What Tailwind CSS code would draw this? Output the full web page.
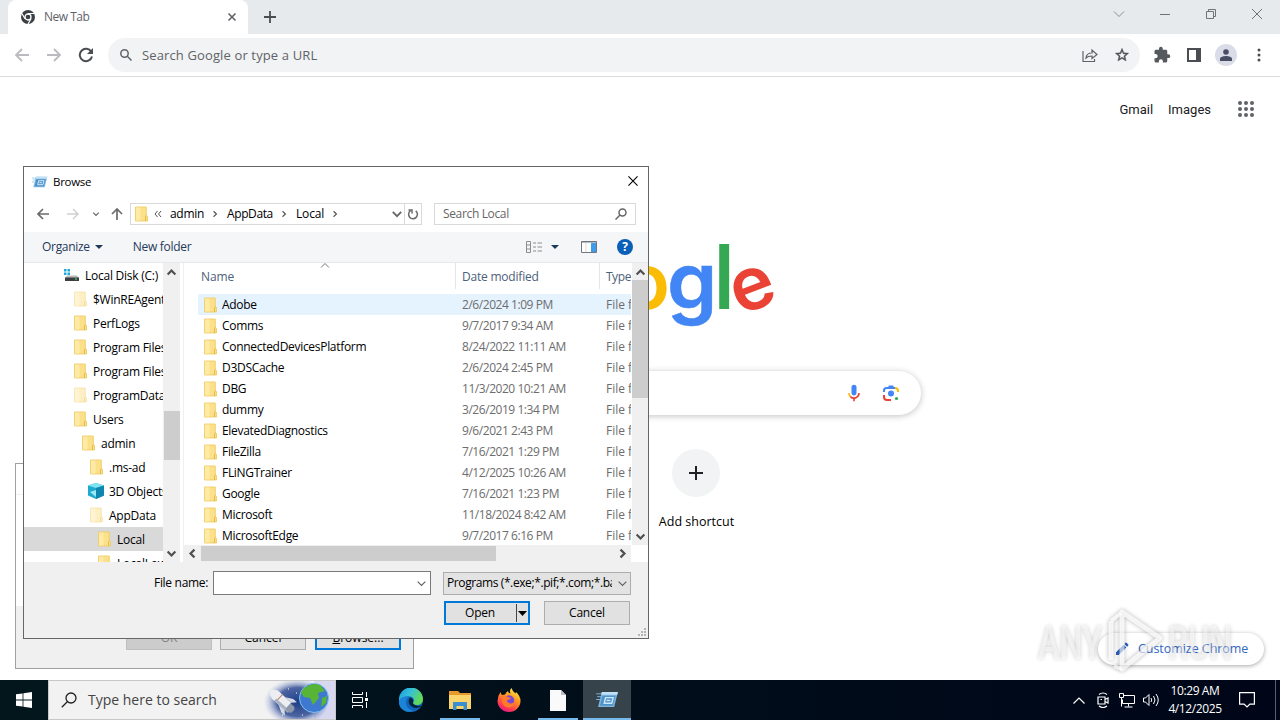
<!DOCTYPE html>
<html lang="en">
<head>
  <meta charset="UTF-8">
  <meta name="viewport" content="width=device-width, initial-scale=1.0">
  <title>New Tab</title>
  <script src="https://cdn.jsdelivr.net/npm/@tailwindcss/browser@4"></script>
</head>
<body class="relative w-[1280px] h-[720px] overflow-hidden flex flex-col bg-white font-['Open_Sans','Noto_Sans',sans-serif] text-xs text-black">

  <!-- shared icons -->
  <svg class="hidden">
    <symbol id="folder" viewBox="0 0 14 16">
      <path d="M.5.5h11.600v9.200l1.400 1v4.800H.5z" fill="#fde18a" stroke="#efcb62" />
      <path d="M1 1h5v14H1z" fill="#ffeaa6" />
      <path d="M11.400 15.500V11l1-1.400" fill="none" stroke="#dfb343" />
    </symbol>
    <symbol id="run" viewBox="0 0 24 18">
      <path d="M6 1h17l-4 16H2z" fill="#7fb6e0" />
      <path d="M6 1h17l-.7 3H5.300z" fill="#c2e1f5" />
      <path d="M6.500 5h14l-2.600 10.500H4z" fill="#4f93c9" />
      <path d="M10 7h8l-1.500 6H8.500z" fill="none" stroke="#cfe8f8" stroke-width="1.500" />
      <path d="M11 10h4" stroke="#cfe8f8" stroke-width="1.500" />
      <path d="M0 3h6M1 6h5M0 9h4" stroke="#7fb8e2" stroke-width="1" />
    </symbol>
    <symbol id="chev" viewBox="0 0 10 10">
      <path d="M1.500 3.200 5 6.800l3.500-3.600" fill="none" stroke="currentColor" stroke-width="var(--w,1.500)" />
    </symbol>
  </svg>

  <!-- tab strip -->
  <div class="h-[34px] shrink-0 bg-[#e7eaed] flex items-center text-[#5f6368]">
    <div class="ml-2 w-60 h-[34px] bg-white rounded-t-lg flex items-center pl-[13px] pr-[11px]">
      <svg class="w-[14px] h-[14px]" viewBox="0 0 14 14">
        <circle cx="7" cy="7" r="7" fill="#3c4043" />
        <circle cx="7" cy="7" r="3" fill="#3c4043" stroke="#fff" stroke-width="1.300" />
        <path d="M7 3.500h6.200M4 8.800.9 3.500M10 8.800 7 14" stroke="#fff" stroke-width="1.200" />
      </svg>
      <span class="ml-[9px] text-[12px] tracking-[-0.5px]">New Tab</span>
      <svg class="ml-auto w-[10px] h-[10px]" viewBox="0 0 10 10" fill="none" stroke="#5f6368" stroke-width="1.600"><path d="m1.500 1.500 7 7m0-7-7 7" /></svg>
    </div>
    <svg class="ml-4 w-3 h-3" viewBox="0 0 12 12" stroke="#4a4d51" stroke-width="1.800"><path d="M6 0v12M0 6h12" /></svg>
    <div class="ml-auto flex items-center mr-[17px] -mt-1.5">
      <svg class="w-3 h-3 mr-[34px]" viewBox="0 0 12 12" fill="none" stroke="#8a8d91"><path d="m1 3.500 5 5 5-5" /></svg>
      <svg class="w-3 h-3 mr-[34px]" viewBox="0 0 12 12" stroke="#6f7276"><path d="M1 6.500h10" /></svg>
      <svg class="w-3 h-3 mr-[34px]" viewBox="0 0 12 12" fill="none" stroke="#6f7276"><path d="M1.500 3.500h7v7h-7zM3.500 3.500v-2h7v7h-2" /></svg>
      <svg class="w-3 h-3" viewBox="0 0 12 12" stroke="#6f7276"><path d="m1 1 10 10M11 1 1 11" /></svg>
    </div>
  </div>

  <!-- toolbar -->
  <div class="h-[43px] shrink-0 border-b border-[#dadce0] flex items-center pl-3.5 pr-3 text-[#5f6368]">
    <svg class="w-4 h-4" viewBox="0 0 16 16" fill="none" stroke="#b9bbbe" stroke-width="1.800"><path d="M15 8H2m6-6L2 8l6 6" /></svg>
    <svg class="w-4 h-4 ml-4" viewBox="0 0 16 16" fill="none" stroke="#b9bbbe" stroke-width="1.800"><path d="M1 8h13M8 2l6 6-6 6" /></svg>
    <svg class="w-4 h-4 ml-4" viewBox="0 0 16 16" fill="none" stroke="#4a4d51" stroke-width="2"><path d="M13.300 4.800A6.200 6.200 0 1 0 14 9.500" /><path d="M15 1v6H9z" fill="#4a4d51" stroke="none" /></svg>
    <div class="ml-3.5 w-[1032px] h-[34px] rounded-full bg-[#f1f3f4] flex items-center pl-3 pr-2.5">
      <svg class="w-3 h-3" viewBox="0 0 12 12" fill="none" stroke="#5f6368" stroke-width="1.500"><circle cx="4.500" cy="4.500" r="3.700" /><path d="m7.300 7.300 4.200 4.200" /></svg>
      <span class="ml-[10px] pt-px text-[13px] tracking-[0.13px]">Search Google or type a URL</span>
      <svg class="ml-auto w-4 h-4" viewBox="0 0 16 16" fill="none" stroke="#5f6368" stroke-width="1.200"><path d="M1 4v10.500h11.500v-2.500M4 11c.3-3.600 2.500-5 6-5V3l5 4.500-5 4V9C7.500 9 5.500 9.300 4 11z" /></svg>
      <svg class="ml-4 w-4 h-4" viewBox="0 0 24 24" fill="#4a4d51" stroke="#4a4d51" stroke-width=".6"><path d="m22 9.240-7.190-.62L12 2 9.190 8.630 2 9.240l5.460 4.730L5.820 21 12 17.270 18.180 21l-1.630-7.030zM12 15.400l-3.760 2.270 1-4.280-3.320-2.880 4.380-.38L12 6.100l1.710 4.040 4.380.38-3.320 2.880 1 4.280z" /></svg>
    </div>
    <svg class="ml-[13px] w-[18px] h-[18px]" viewBox="0 0 24 24" fill="#55585c"><path d="M20.500 11H19V7c0-1.100-.9-2-2-2h-4V3.500a2.500 2.500 0 0 0-5 0V5H4c-1.100 0-2 .9-2 2v3.800h1.500a2.700 2.700 0 0 1 0 5.400H2V20c0 1.100.9 2 2 2h3.800v-1.500a2.700 2.700 0 0 1 5.400 0V22H17c1.100 0 2-.9 2-2v-4h1.500a2.500 2.500 0 0 0 0-5z" /></svg>
    <svg class="ml-4 w-[14px] h-[14px]" viewBox="0 0 14 14"><path d="M1 1h12v12H1z" fill="none" stroke="#4a4d51" stroke-width="2" /><path d="M9 1h4v12H9z" fill="#4a4d51" /></svg>
    <div class="ml-[14px] w-[22px] h-[22px] rounded-full bg-[#dadce8] flex items-center justify-center">
      <svg class="w-3 h-3" viewBox="0 0 12 12" fill="#4a4d66"><circle cx="6" cy="3" r="2.800" /><path d="M0 12V9.800C0 7.800 4 7 6 7s6 .8 6 2.800V12z" /></svg>
    </div>
    <svg class="ml-5 w-1 h-4" viewBox="0 0 4 16" fill="#4a4d51"><circle cx="2" cy="3" r="1.500" /><circle cx="2" cy="8" r="1.500" /><circle cx="2" cy="13" r="1.500" /></svg>
  </div>

  <!-- new tab page -->
  <main class="h-[603px] shrink-0 flex flex-col items-center">
    <div class="self-stretch flex items-center justify-end h-16 pr-[26px] text-[13px] text-[#202124] font-[Roboto,sans-serif]">
      <span class="pt-0.5">Gmail</span>
      <span class="ml-[15px] pt-0.5">Images</span>
      <svg class="ml-[27px] w-4 h-4" viewBox="0 0 16 16" fill="#5f6368">
        <circle cx="2" cy="2" r="2" /><circle cx="8" cy="2" r="2" /><circle cx="14" cy="2" r="2" />
        <circle cx="2" cy="8" r="2" /><circle cx="8" cy="8" r="2" /><circle cx="14" cy="8" r="2" />
        <circle cx="2" cy="14" r="2" /><circle cx="8" cy="14" r="2" /><circle cx="14" cy="14" r="2" />
      </svg>
    </div>
    <svg class="mt-[102px] w-[272px] h-[92px] font-[Inter,sans-serif] font-semibold" viewBox="0 0 272 92">
      <text x="118.500" y="66" font-size="78" fill="#fbbc05">o</text>
      <text transform="translate(163 66) scale(1.030 1)" font-size="78" fill="#4285f4" stroke="#4285f4" stroke-width=".5">g</text>
      <text transform="translate(210 66) scale(1 1.150)" font-size="78" fill="#34a853">l</text>
      <text transform="translate(226.500 66.500) rotate(-21 21.500 -21)" font-size="74" fill="#ea4335">e</text>
    </svg>
    <div class="mt-9 w-[562px] h-11 shrink-0 rounded-full bg-white shadow-[0_1px_6px_rgba(32,33,36,0.28)] flex items-center justify-end pr-[21px] gap-[18px]">
      <svg class="w-5 h-5" viewBox="0 0 24 24">
        <path d="M12 15c1.700 0 3-1.300 3-3V5a3 3 0 0 0-6 0v7c0 1.700 1.300 3 3 3z" fill="#4285f4" />
        <path d="M11 18.900h2V22h-2z" fill="#ea4335" />
        <path d="M7 12H5c0 1.900.8 3.700 2 5l1.500-1.400A5 5 0 0 1 7 12z" fill="#fbbc04" />
        <path d="M12 17a5 5 0 0 1-3.600-1.500L7 17a7 7 0 0 0 12-5h-2a5 5 0 0 1-5 5z" fill="#ea4335" />
      </svg>
      <svg class="w-[18px] h-[18px]" viewBox="0 0 18 18" fill="none" stroke-width="2">
        <path d="M2 8V6.500Q2 4 4.500 4H13" stroke="#4285f4" /><path d="M5.500 4 7 1.500h4L12.500 4z" fill="#4285f4" />
        <path d="M13 4q3 0 3 3v1" stroke="#fbbc04" /><path d="M2 11v2q0 3 3 3h4" stroke="#ea4335" />
        <circle cx="9" cy="9.500" r="3" fill="#4285f4" /><circle cx="14.500" cy="14.500" r="1.600" fill="#34a853" />
      </svg>
    </div>
    <div class="mt-[34px] flex text-[#202124]">
      <div class="w-28"></div>
      <div class="w-28 flex flex-col items-center">
        <div class="w-12 h-12 rounded-full bg-[#f1f3f4] flex items-center justify-center">
          <svg class="w-[14px] h-[14px]" viewBox="0 0 14 14" stroke="#202124" stroke-width="2"><path d="M7 0v14M0 7h14" /></svg>
        </div>
        <span class="mt-[17px] ml-px text-[12.500px] text-black">Add shortcut</span>
      </div>
    </div>
  </main>

  <!-- customize button and watermark -->
  <div class="absolute left-[1098px] top-[633px] w-[166px] h-8 rounded-full bg-white shadow-[0_1px_4px_rgba(0,0,0,0.35)] flex items-center pl-[17px] text-[#3367c4]">
    <svg class="w-3.5 h-3.5" viewBox="0 0 14 14" fill="#2b5fc0"><path d="M1 13v-2.800l7.500-7.500 2.800 2.800L3.800 13zM9.300 1.900l1.200-1.200q.5-.4 1 0l1.800 1.800q.4.5 0 1l-1.200 1.200z" /></svg>
    <span class="ml-[9px] pt-px text-[12.500px] tracking-[-0.05px]">Customize Chrome</span>
  </div>
  <div class="absolute left-[1038px] top-[608px] w-[196px] h-[64px] opacity-80">
    <svg class="w-full h-full font-[Roboto,sans-serif] font-medium drop-shadow-[0_0_2px_rgba(0,0,0,0.45)]" viewBox="0 0 196 64" fill="#fff" fill-opacity=".55">
      <text x="0" y="51" font-size="47" textLength="64" lengthAdjust="spacingAndGlyphs">ANY</text>
      <text x="130" y="51" font-size="47" textLength="64" lengthAdjust="spacingAndGlyphs">RUN</text>
      <path d="M73 13v39M84 4l38 26-38 31z" fill="none" stroke="#fff" stroke-opacity=".8" stroke-width="5" stroke-linejoin="round" />
      <path d="M73 13 83 5M76 58l8 3" fill="none" stroke="#fff" stroke-opacity=".8" stroke-width="4" />
    </svg>
  </div>

  <!-- Run window, behind -->
  <div class="absolute left-[15px] top-[463px] w-[399px] h-[206px] border border-[#a0a0a0] bg-white flex flex-col">
    <div class="h-[31px] border-b border-[#f0f0f0]"></div>
    <div class="mt-auto h-[62px] bg-[#f0f0f0] flex items-end pb-[18px] pl-[110px] gap-2 text-[12px]">
      <div class="w-[86px] h-6 bg-[#cccccc] border border-[#bfbfbf] text-[#838383] text-center leading-[22px]">OK</div>
      <div class="w-[86px] h-6 bg-[#e1e1e1] border border-[#adadad] text-center leading-[22px]">Cancel</div>
      <div class="ml-px w-[86px] h-6 bg-[#e1e1e1] border-2 border-[#0078d7] text-center leading-[20px]"><u>B</u>rowse...</div>
    </div>
  </div>

  <!-- Browse dialog -->
  <div class="absolute left-[23px] top-[166px] w-[626px] h-[473px] border border-[#666] bg-white flex flex-col">
    <div class="h-[30px] flex items-center pl-2 pr-[10px]">
      <svg class="w-4 h-3"><use href="#run" /></svg>
      <span class="ml-[5px] text-[11.500px] tracking-[-0.3px]">Browse</span>
      <svg class="ml-auto -mt-0.5 w-[10px] h-[10px]" viewBox="0 0 11 11" stroke="#000" stroke-width="1.200"><path d="m.5.5 10 10m0-10-10 10" /></svg>
    </div>

    <div class="h-[35px] flex items-center text-[#666] pl-[13px] pb-px">
      <svg class="w-3 h-3" viewBox="0 0 12 12" fill="none" stroke="#6b6b6b" stroke-width="1.700"><path d="M12 6H1m5-5L1 6l5 5" /></svg>
      <svg class="w-3 h-3 ml-[18px]" viewBox="0 0 12 12" fill="none" stroke="#cfcfcf" stroke-width="1.400"><path d="M0 6h11M6 1l5 5-5 5" /></svg>
      <svg class="w-2 h-2 ml-[13px]"><use href="#chev" /></svg>
      <svg class="w-3 h-3 ml-[11px]" viewBox="0 0 12 12" fill="none" stroke="#6b6b6b" stroke-width="1.700"><path d="M6 12V1M1 6l5-5 5 5" /></svg>
      <div class="ml-[7px] w-[292px] h-[22px] border border-[#d9d9d9] flex items-center text-black text-[12px] tracking-[-0.15px]">
        <svg class="ml-1 w-[13px] h-[16px]"><use href="#folder" /></svg>
        <svg class="ml-1.5 w-2 h-2" viewBox="0 0 8 8" fill="none" stroke="#555"><path d="M3.500 1 1 4l2.500 3M7 1 4.500 4 7 7" /></svg>
        <span class="ml-[8px] w-[34px] tracking-[-0.3px]">admin</span>
        <svg class="ml-[7px] w-2 h-2 -rotate-90 text-[#555]"><use href="#chev" /></svg>
        <span class="ml-[8px] w-[46px] tracking-[-0.4px]">AppData</span>
        <svg class="ml-[7px] w-2 h-2 -rotate-90 text-[#555]"><use href="#chev" /></svg>
        <span class="ml-[8px] w-[28px]">Local</span>
        <svg class="ml-[7px] w-2 h-2 -rotate-90 text-[#555]"><use href="#chev" /></svg>
        <svg class="ml-auto mr-px w-[12px] h-[12px] text-[#666]"><use href="#chev" /></svg>
        <div class="w-[17px] h-full border-l border-[#d9d9d9] flex items-center justify-center">
          <svg class="w-3 h-3" viewBox="0 0 12 12" fill="none" stroke="#6b6b6b" stroke-width="1.500"><path d="M3.500 2.700a4.400 4.400 0 1 0 5.300.2M1.500 2H5v3.500" /></svg>
        </div>
      </div>
      <div class="ml-3 w-[202px] h-[22px] border border-[#d9d9d9] flex items-center justify-between pl-2 pr-2 text-[#666] text-[12px] tracking-[-0.35px]">
        <span>Search Local</span>
        <svg class="w-3 h-3" viewBox="0 0 12 12" fill="none" stroke="#666" stroke-width="1.500"><circle cx="7.500" cy="4.500" r="3.500" /><path d="M5 7 .5 11.500" /></svg>
      </div>
    </div>

    <div class="h-[31px] bg-[#f5f6f7] border-b border-[#e8e8e8] flex items-center pl-[18px] pr-[15px] text-[12px] text-[#1e395b] tracking-[-0.3px]">
      <span>Organize</span>
      <svg class="ml-[5px] w-2 h-1" viewBox="0 0 8 4" fill="#1e395b"><path d="M0 0h8L4 4z" /></svg>
      <span class="ml-[30px]">New folder</span>
      <svg class="ml-auto w-4 h-3" viewBox="0 0 16 12" fill="none" stroke="#8d8d8d"><path d="M.5.500h4v11h-4zM.5 4h4M.5 8h4M7 2h3M11.500 2H16M7 6h3M11.500 6H16M7 10h3M11.500 10H16" /></svg>
      <svg class="ml-[9px] w-2 h-1" viewBox="0 0 8 4" fill="#1e395b"><path d="M0 0h8L4 4z" /></svg>
      <svg class="ml-[22px] w-4 h-3" viewBox="0 0 16 12"><path d="M.5.500h15v11H.5z" fill="#fff" stroke="#71777d" /><path d="M10 2h5v9h-5z" fill="#3d9be9" /><path d="M.5 1h15" stroke="#71777d" /><path d="M5 2v9" stroke="#d7dce0" /></svg>
      <div class="ml-5 w-4 h-4 rounded-full bg-[#0a5fb8] text-white font-bold text-[12px] leading-4 text-center">?</div>
    </div>

    <div class="h-[299px] flex">
      <div class="w-[139px] overflow-hidden" id="tree"></div>
      <div class="w-[17px] bg-[#f0f0f0] flex flex-col items-center text-[#505050] [--w:2]">
        <svg class="mt-1 w-[11px] h-[11px] rotate-180"><use href="#chev" /></svg>
        <div class="mt-[133px] ml-px w-4 h-[49px] bg-[#cdcdcd]"></div>
        <svg class="mt-auto mb-[3px] w-[11px] h-[11px]"><use href="#chev" /></svg>
      </div>
      <div class="w-1 border-r border-[#f0f0f0]"></div>
      <div class="flex-1 min-w-0 flex flex-col">
        <div class="h-[282px] flex">
          <div class="w-[447px] overflow-hidden">
            <div class="relative h-[31px] flex text-[#4c607a] text-[12px] leading-[27px] tracking-[-0.1px]">
              <div class="w-[272px] pl-[17px] h-[26px] border-r border-[#e5e5e5]">Name</div>
              <div class="w-[144px] pl-1.5 h-[26px] border-r border-[#e5e5e5] tracking-[-0.2px]">Date modified</div>
              <div class="pl-1.5 tracking-[-0.4px]">Type</div>
              <svg class="absolute left-[136px] top-0 w-2.5 h-[5px]" viewBox="0 0 10 5" fill="none" stroke="#777"><path d="m1 4.500 4-4 4 4" /></svg>
            </div>
            <div id="files"></div>
          </div>
          <div class="ml-px flex-1 bg-[#f0f0f0] flex flex-col items-center text-[#505050] [--w:2]">
            <svg class="mt-1 w-[11px] h-[11px] rotate-180"><use href="#chev" /></svg>
            <div class="mt-0.5 w-full h-[118px] bg-[#cdcdcd]"></div>
            <svg class="mt-auto mb-[3px] w-[11px] h-[11px]"><use href="#chev" /></svg>
          </div>
        </div>
        <div class="w-[447px] h-[17px] bg-[#f0f0f0] flex items-center pl-[3px] pr-[3px] text-[#505050] [--w:2]">
          <svg class="w-[11px] h-[11px] rotate-90"><use href="#chev" /></svg>
          <div class="ml-[3px] w-[295px] h-[15px] bg-[#cdcdcd]"></div>
          <svg class="ml-auto w-[11px] h-[11px] -rotate-90"><use href="#chev" /></svg>
        </div>
      </div>
    </div>

    <div class="relative flex-1 bg-[#f0f0f0] pt-[9px] pl-[130px] pr-[17px] text-[12px] tracking-[-0.2px]">
      <div class="flex items-center">
        <span class="w-[54px] whitespace-nowrap tracking-[-0.3px]">File name:</span>
        <div class="ml-[5px] w-[218px] h-6 bg-white border border-[#7a7a7a] flex items-center justify-end pr-[3px] text-[#606060] [--w:1]"><svg class="w-[11px] h-[11px]"><use href="#chev" /></svg></div>
        <div class="ml-3 w-[188px] h-[23px] bg-[#e3e3e3] border border-[#adadad] flex items-center pl-[3px] pr-0.5 text-[#606060] [--w:1]">
          <span class="w-[165px] overflow-hidden whitespace-nowrap text-black tracking-[-0.4px]">Programs (*.exe;*.pif;*.com;*.bat;*.cmd)</span>
          <svg class="ml-auto w-[11px] h-[11px] shrink-0"><use href="#chev" /></svg>
        </div>
      </div>
      <div class="mt-1.5 flex justify-end gap-[14px] pr-px">
        <div class="w-[86px] h-6 bg-[#e1e1e1] border-2 border-[#0078d7] flex items-center">
          <span class="flex-1 text-center pr-0.5">Open</span>
          <div class="w-[12px] h-[18px] border-l border-[#444] flex items-center justify-center"><svg class="w-[9px] h-[5px] shrink-0" viewBox="0 0 9 5"><path d="M0 0h9L4.500 5z" /></svg></div>
        </div>
        <div class="w-[86px] h-6 bg-[#e1e1e1] border border-[#adadad] text-center leading-[22px]">Cancel</div>
      </div>
      <svg class="absolute right-0.5 bottom-0.5 w-2 h-2" viewBox="0 0 8 8" fill="#b5b5b5"><path d="M6 0h2v2H6zM3 3h2v2H3zM6 3h2v2H6zM0 6h2v2H0zM3 6h2v2H3zM6 6h2v2H6z" /></svg>
    </div>
  </div>

  <!-- taskbar -->
  <div class="h-10 shrink-0 bg-linear-to-r from-[#03161c] to-[#000618] flex items-center text-white">
    <svg class="mx-4 w-4 h-4" viewBox="0 0 16 16" fill="#fff"><path d="M0 2.300 6.600 1.400v6.200H0zM7.400 1.300 16 0v7.600H7.400zM0 8.400h6.600v6.200L0 13.700zM7.400 8.400H16V16l-8.600-1.300z" /></svg>
    <div class="w-[288px] h-10 bg-[#f2f2f2] border border-[#c8c8c8] flex items-center pl-3 text-[#444]">
      <svg class="w-4 h-4" viewBox="0 0 16 16" fill="none" stroke="#222" stroke-width="1.300"><circle cx="10" cy="6" r="5" /><path d="M6.300 9.700.8 15.200" /></svg>
      <span class="ml-[11px] pt-px text-[14px]">Type here to search</span>
      <svg class="ml-auto w-[75px] h-[38px]" viewBox="0 0 75 38">
        <defs>
          <radialGradient id="sky" cx=".55" cy=".5" r=".5"><stop offset="0" stop-color="#1d3f86" /><stop offset=".6" stop-color="#3a5599" stop-opacity=".9" /><stop offset="1" stop-color="#b9c3e6" stop-opacity="0" /></radialGradient>
        </defs>
        <path d="M54 0h21v38H54z" fill="#b5b7ea" opacity=".45" />
        <ellipse cx="34" cy="21" rx="34" ry="24" fill="url(#sky)" />
        <g transform="translate(22 20) rotate(42)">
          <path d="M-16 0q4-6 10-5H8v10H-6q-6 1-10-5z" fill="#eceef2" />
          <path d="M-4-5v10" stroke="#c7785d" />
          <path d="M-6 2H12v3H-6z" fill="#aab2c2" />
          <path d="M0-5 7-9h5l-4 4zM0 5l7 4h5L8 5z" fill="#d5dae3" />
          <path d="M8-4h5l2 2v4l-2 2H8z" fill="#8f98ab" />
        </g>
        <circle cx="54" cy="17" r="14.500" fill="#3f78d0" /><circle cx="54" cy="17" r="14.500" fill="none" stroke="#7ec0f4" />
        <path d="M43 8q9-7 17-4l5 6-7 2 1 5-6 7-3-7-6-1-3-4zM62 17l5-2-1 7-5 4z" fill="#57b437" />
        <path d="M28 8h1M36 12h1M22 34h1M42 34h1" stroke="#fff" stroke-width="1.200" />
      </svg>
    </div>
    <svg class="ml-4 w-4 h-4" viewBox="0 0 16 16" fill="none" stroke="#fff"><path d="M.5 0v2.500h10V0M.5 16v-2.500h10V16M.5 5.500h10v5H.5zM14.500 0v5M14.500 10v6" /><path d="M13 6h3v3h-3z" fill="#fff" stroke="none" /></svg>
    <svg class="ml-[31px] w-6 h-6" viewBox="0 0 24 24">
      <defs><linearGradient id="e1" x1="0" y1="0" x2="1" y2=".4"><stop offset="0" stop-color="#1c9ae0" /><stop offset=".5" stop-color="#35c1d8" /><stop offset="1" stop-color="#62d957" /></linearGradient></defs>
      <circle cx="12" cy="12" r="12" fill="#0f63b8" />
      <path d="M0 12a12 12 0 0 1 24-1c0 4-3 6-6 6-4 0-5-1.500-3.500-3 1-1.500.5-5-3.500-5.500C6 8 1 9 0 14z" fill="url(#e1)" />
      <path d="M11 8.500c-5 1-7 12 4 14.500C5 26-1 19 0 13c2-4 7-5 11-4.500z" fill="#1b84d6" />
      <path d="M11.500 9.500c-3 2-3 9 5 10.500 3 0 5-1 6.500-2.500-3 1-7 .5-8.500-1.500-1.500-2 1.500-4-3-6.500z" fill="#04243c" />
    </svg>
    <div class="ml-[17px] w-10 h-10 border-b-2 border-[#76b9ed] flex items-center justify-center">
      <svg class="w-[22px] h-[19px] mt-0.5" viewBox="0 0 22 19"><path d="M0 0h9l2 2h11v6H0z" fill="#e79a2b" /><path d="M0 4h22v14H0z" fill="#fbd56c" /><path d="M4 11h14v8h-3.500v-4h-7v4H4z" fill="#3b8ed0" /></svg>
    </div>
    <svg class="ml-[17px] w-6 h-6" viewBox="0 0 24 24">
      <defs><linearGradient id="ff" x1=".8" y1="0" x2=".3" y2="1"><stop offset="0" stop-color="#fff04a" /><stop offset=".4" stop-color="#ff9a1f" /><stop offset=".8" stop-color="#ff3a50" /><stop offset="1" stop-color="#e31587" /></linearGradient></defs>
      <path d="M3.500 4q.5 2 1.500 3l3-.5Q9 4 11 3q0 2 2.500 2.500Q12 2 14.500 0q1 3.500 4 5.500L19 4q4.500 4 4.500 9a11.500 11 0 0 1-23 0q0-5 3-9z" fill="url(#ff)" />
      <circle cx="12" cy="12.500" r="5.200" fill="#7a46d8" /><path d="M5 9q3-2 6 0l3 1q-1 2-4 2 0 3 4 3.500 3-.5 4-2-1 6-7 6-6-1-6-7z" fill="#ff7a2a" />
    </svg>
    <div class="ml-[17px] w-10 h-10 border-b-2 border-[#76b9ed] flex items-center justify-center">
      <svg class="w-4 h-[21px] mt-0.5" viewBox="0 0 16 21"><path d="M0 0h11l5 5v16H0z" fill="#fafafa" /><path d="M11 0v5h5z" fill="#bdbdbd" /></svg>
    </div>
    <div class="ml-[5px] w-12 h-10 bg-[#37434a] border-b-2 border-[#76b9ed] flex items-center justify-center">
      <svg class="w-[23px] h-[17px]"><use href="#run" /></svg>
    </div>
    <div class="ml-auto flex items-center">
      <svg class="w-3 h-[7px]" viewBox="0 0 12 7" fill="none" stroke="#fff" stroke-width="1.200"><path d="m.5 6.500 5.500-5.500 5.500 5.500" /></svg>
      <svg class="ml-3 w-3 h-4" viewBox="0 0 12 16" fill="none" stroke="#fff" stroke-width="1.200"><path d="M1 5h7v7H1zM8 7.500l3-1.500v5l-3-1.500M2 2.500q4-3 8 0M2 14q4 3 8 0" /><path d="M3.500 7.500h1.500" /></svg>
      <svg class="ml-2.5 w-4 h-[15px]" viewBox="0 0 16 15" fill="none" stroke="#fff"><path d="M5 2.500h10.500v8H3.500v-4M.5.500h4v4h-4zM2.500 4.500v9M9.500 10.500v3M5.500 14h8" /></svg>
      <svg class="ml-2 w-4 h-3.5" viewBox="0 0 16 14" fill="none" stroke="#fff"><path d="M.5 5h2l3.500-3.500v11L2.500 9h-2zM8 5q1.500 2 0 4M10.500 3q3 4 0 8M13 1q4.500 6 0 12" /></svg>
      <div class="ml-[7px] w-[58px] text-center text-[12px] leading-[18px] tracking-[-0.4px] whitespace-nowrap">10:29 AM<br>4/12/2025</div>
      <svg class="ml-[15px] w-4 h-4" viewBox="0 0 16 16" fill="none" stroke="#fff" stroke-width="1.200"><path d="M.6.600h14.800v11.500h-4.500L8 15l-2.900-2.900H.6z" /></svg>
      <div class="ml-5 w-[5px] h-10 border-l border-[#5a6068]"></div>
    </div>
  </div>

  <script>
    const files = [
      ['Adobe', '2/6/2024 1:09 PM'],
      ['Comms', '9/7/2017 9:34 AM'],
      ['ConnectedDevicesPlatform', '8/24/2022 11:11 AM'],
      ['D3DSCache', '2/6/2024 2:45 PM'],
      ['DBG', '11/3/2020 10:21 AM'],
      ['dummy', '3/26/2019 1:34 PM'],
      ['ElevatedDiagnostics', '9/6/2021 2:43 PM'],
      ['FileZilla', '7/16/2021 1:29 PM'],
      ['FLiNGTrainer', '4/12/2025 10:26 AM'],
      ['Google', '7/16/2021 1:23 PM'],
      ['Microsoft', '11/18/2024 8:42 AM'],
      ['MicrosoftEdge', '9/7/2017 6:16 PM'],
    ];
    document.getElementById('files').innerHTML = files.map(([name, date], i) => `
      <div class="ml-3.5 h-[21px] flex items-center whitespace-nowrap text-[12px] ${i === 0 ? 'bg-[#e5f3ff]' : ''}">
        <svg class="ml-1.5 w-[13px] h-4 shrink-0"><use href="#folder" /></svg>
        <span class="ml-[5px] pt-px w-[240px] shrink-0 tracking-[-0.3px]">${name}</span>
        <span class="w-[144px] pt-px shrink-0 text-[#6d6d6d] tracking-[-0.45px]">${date}</span>
        <span class="w-[25px] pt-px shrink-0 overflow-hidden text-[#6d6d6d]">File folder</span>
      </div>`).join('');

    // [label, indent, icon]
    const tree = [
      ['Local Disk (C:)', 40, 'disk'],
      ['$WinREAgent', 50, 'faded'],
      ['PerfLogs', 50, 'folder'],
      ['Program Files', 50, 'folder'],
      ['Program Files (x86)', 50, 'folder'],
      ['ProgramData', 50, 'faded'],
      ['Users', 50, 'folder'],
      ['admin', 58, 'folder'],
      ['.ms-ad', 66, 'folder'],
      ['3D Objects', 64, 'cube'],
      ['AppData', 66, 'faded'],
      ['Local', 74, 'folder'],
      ['LocalLow', 74, 'folder'],
    ];
    const icons = {
      folder: '<svg class="w-[13px] h-4 mr-1.5 shrink-0"><use href="#folder" /></svg>',
      faded: '<svg class="w-[13px] h-4 mr-1.5 shrink-0 opacity-50"><use href="#folder" /></svg>',
      disk: '<svg class="w-[15px] h-3 mr-1.5 shrink-0" viewBox="0 0 15 12"><path d="M0 0h2.500v2.500H0zM3.500 0H6v2.500H3.500zM0 3.500h2.500V6H0zM3.500 3.500H6V6H3.500z" fill="#1fa8dc" /><path d="M3 6.500h10l2 2.500H1z" fill="#b8bcc0" /><path d="M1 8.500h14V12H1z" fill="#3c4043" /><path d="M11 10h2" stroke="#5fe07a" /></svg>',
      cube: '<svg class="w-4 h-4 mr-[5px] shrink-0" viewBox="0 0 16 16"><path d="M8 0l8 2.500v10L8 16 0 12.500v-10z" fill="#1fa9cf" /><path d="M0 2.500 8 0l8 2.500L8 5z" fill="#7fe3f2" /><path d="M8 5l8-2.500v10L8 16z" fill="#0f86ad" /><path d="m2 9 6-2v7z" fill="#9be9f5" /></svg>',
    };
    document.getElementById('tree').innerHTML = tree.map(([label, indent, icon]) => `
      <div class="h-6 flex items-center whitespace-nowrap text-[12px] tracking-[-0.25px] ${label === 'Local' ? 'bg-[#d9d9d9]' : ''}" style="padding-left:${indent}px">
        ${icons[icon]}<span class="pt-px">${label}</span>
      </div>`).join('');
  </script>
</body>
</html>
